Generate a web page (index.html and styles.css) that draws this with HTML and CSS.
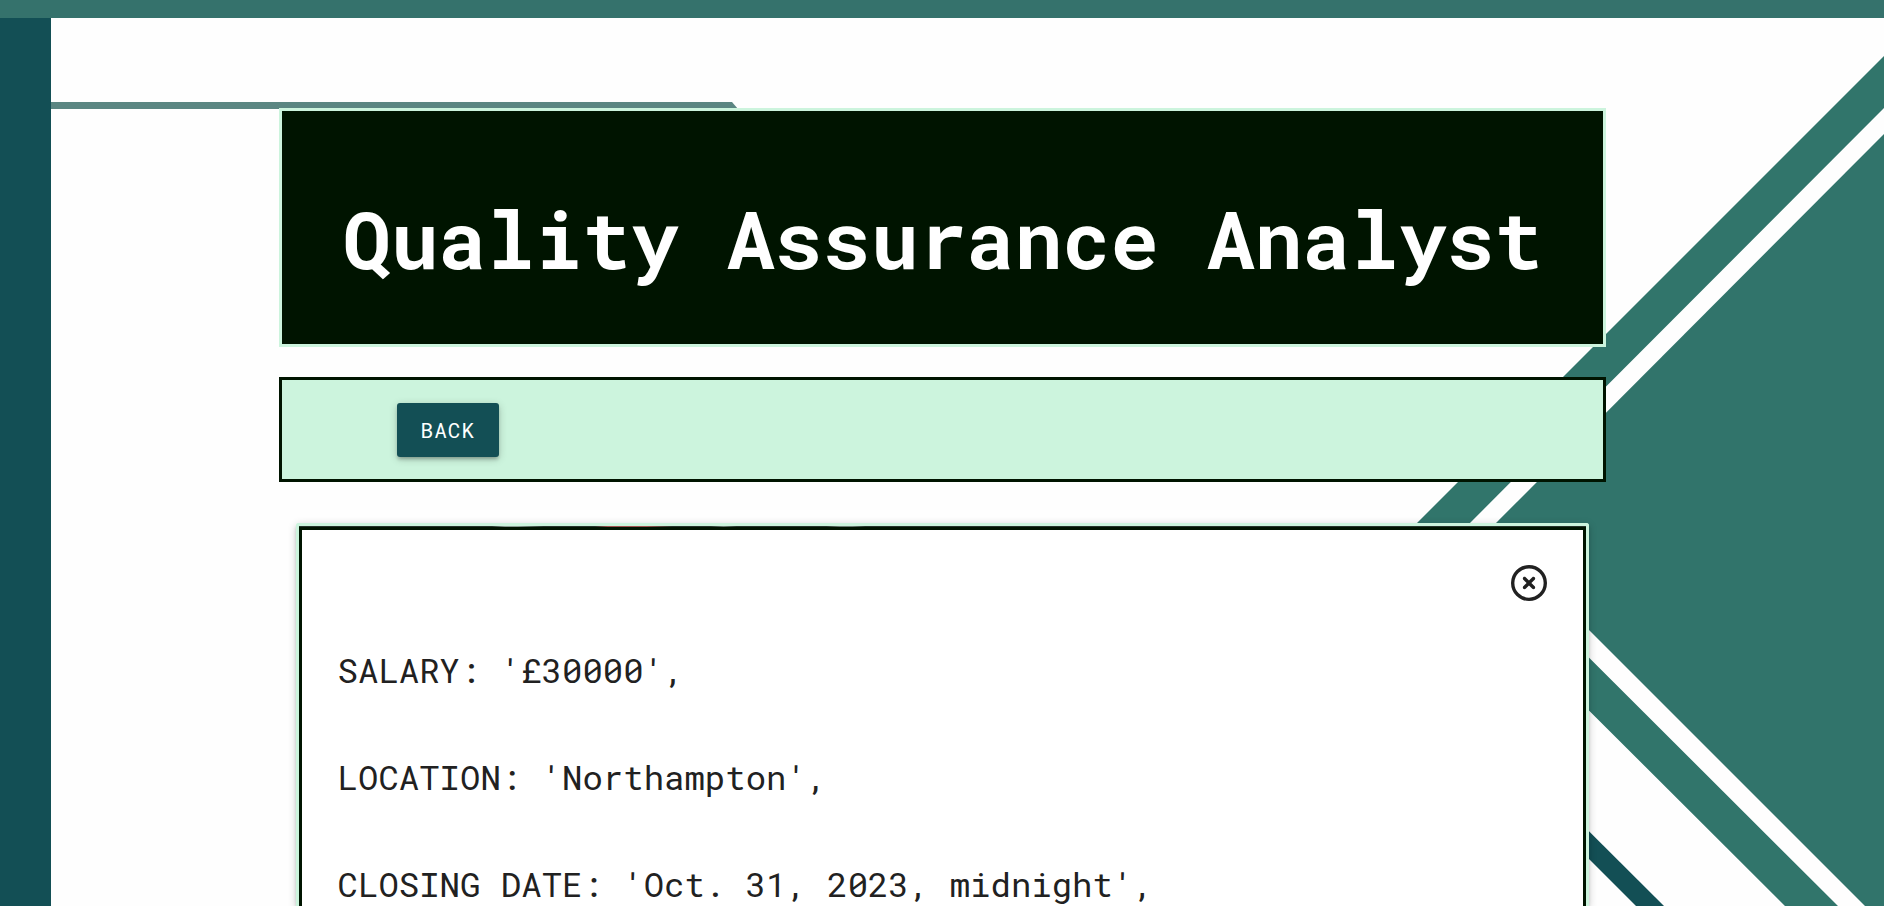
FILE: index.html
```html
<!DOCTYPE html>
<html lang="en">
<head>
  <meta charset="utf-8">
  <meta name="viewport" content="width=device-width, initial-scale=1">
  <title>Quality Assurance Analyst</title>
  <link rel="stylesheet" href="styles.css">
</head>
<body>
  <svg class="backdrop" viewBox="0 0 1884 906" preserveAspectRatio="none" aria-hidden="true">
    <rect width="1884" height="906" fill="#fefefe"/>
    <path d="M51 102H732L738 109H51Z" fill="#5b8682"/>
    <rect y="18" width="51" height="888" fill="#134f55"/>
    <rect width="1884" height="18" fill="#35726c"/>
    <path d="M1884 56L1409 531L1785 906H1838L1462 531L1884 108Z" fill="#31756b"/>
    <path d="M1884 134L1489 530L1865 906H1884Z" fill="#31746b"/>
    <path d="M1400 643L1664 906H1636L1400 670Z" fill="#134f55"/>
  </svg>

  <main class="page">
    <header class="title">
      <h1 class="title__text">Quality Assurance Analyst</h1>
    </header>

    <nav class="toolbar">
      <button class="btn" type="button">BACK</button>
    </nav>

    <article class="card">
      <div class="card__image"></div>
      <div class="card__body">
        <button class="card__close" type="button" aria-label="Close">
          <svg class="card__icon" viewBox="0 0 512 512" aria-hidden="true">
            <path fill="currentColor" d="M256 48a208 208 0 1 1 0 416 208 208 0 1 1 0-416zm0 464A256 256 0 1 0 256 0a256 256 0 1 0 0 512zM175 175c-9.400 9.400-9.400 24.600 0 33.900l47 47-47 47c-9.400 9.400-9.400 24.600 0 33.900s24.600 9.400 33.900 0l47-47 47 47c9.400 9.400 24.600 9.400 33.900 0s9.400-24.600 0-33.900l-47-47 47-47c9.400-9.400 9.400-24.600 0-33.900s-24.600-9.400-33.900 0l-47 47-47-47c-9.400-9.400-24.600-9.400-33.900 0z"/>
          </svg>
        </button>
        <p class="card__line">SALARY: '£30000',</p>
        <p class="card__line">LOCATION: 'Northampton',</p>
        <p class="card__line">CLOSING DATE: 'Oct. 31, 2023, midnight',</p>
      </div>
    </article>
  </main>
</body>
</html>
```

FILE: styles.css
```css
* {
  box-sizing: border-box;
}

body {
  margin: 0;
  height: 100vh;
  overflow: hidden;
  color: #212121;
  font-family: "Roboto Mono", "DejaVu Sans Mono", monospace;
}

.backdrop {
  position: absolute;
  inset: 0;
  z-index: -1;
  width: 100%;
  height: 100%;
}

.page {
  display: flex;
  flex-direction: column;
  height: 100vh;
  margin: 0 calc(15% - 5px) 0 calc(15% - 4px);
  padding-top: 108px;
}

.title {
  padding: 79px 16px 58px;
  border: 3px solid #ccf4dd;
  background: #001400;
  color: #fff;
  text-align: center;
}

.title__text {
  margin: 0;
  font-size: 80px;
  font-weight: 700;
  line-height: 96px;
}

.toolbar {
  margin-top: 30px;
  padding: 23px 115px 22px;
  border: 3px solid #001400;
  background: #ccf4dd;
}

.btn {
  display: block;
  height: 54px;
  padding: 0 24px;
  border: 0;
  border-radius: 3px;
  background: #134f55;
  box-shadow: 0 3px 3px rgba(0, 0, 0, 0.14), 0 4px 2px -3px rgba(0, 0, 0, 0.12), 0 2px 8px rgba(0, 0, 0, 0.2);
  color: #fff;
  font-family: inherit;
  font-size: 21px;
  letter-spacing: 1px;
  line-height: 54px;
  cursor: pointer;
}

.card {
  flex: 1;
  min-height: 0;
  margin: 41px 17px 0;
  border: 3px solid #ccf4dd;
  border-bottom: 0;
  border-radius: 3px 3px 0 0;
  box-shadow: 0 3px 3px rgba(0, 0, 0, 0.14), 0 4px 2px -3px rgba(0, 0, 0, 0.12), 0 2px 8px rgba(0, 0, 0, 0.2);
}

.card__image {
  height: 1px;
  background: linear-gradient(to right, #26332b 0 15%, #8a9c93 16% 17%, #26332b 19% 23%, #a0504e 24% 27%, #26332b 29% 32%, #6d7d74 33%, #26332b 34% 41%, #6d7d74 42% 43%, #26332b 44%);
}

.card__body {
  display: flex;
  flex-direction: column;
  padding: 35px 36px 0;
  border: 3px solid #001400;
  border-bottom: 0;
  background: #fff;
}

.card__close {
  align-self: flex-end;
  width: 36px;
  height: 36px;
  margin-bottom: 44px;
  padding: 0;
  border: 0;
  background: none;
  color: #212121;
  cursor: pointer;
}

.card__icon {
  display: block;
  width: 100%;
  height: 100%;
}

.card__line {
  margin: 0 0 57px;
  font-size: 34px;
  font-weight: 400;
  line-height: 50px;
}
```
